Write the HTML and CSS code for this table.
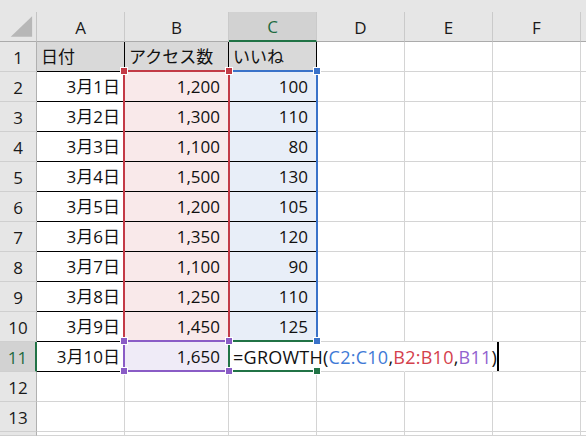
FILE: index.html
```html
<!DOCTYPE html>
<html lang="ja">
<head>
<meta charset="utf-8">
<link rel="stylesheet" href="styles.css">
</head>
<body>
<div class="sheet">
  <div class="strip"></div>

  <div class="corner"><svg width="37" height="30" viewBox="0 0 37 30"><polygon points="11,25 33,4 33,25" fill="#b7b7b7"/></svg></div>
  <div class="ch">A</div><div class="ch">B</div><div class="ch sel">C</div><div class="ch">D</div><div class="ch">E</div><div class="ch">F</div><div class="ch last"></div>

  <div class="rh">1</div><div class="c tb hd">日付</div><div class="c tb hd">アクセス数</div><div class="c tb hd">いいね</div><div class="c"></div><div class="c"></div><div class="c"></div><div class="c"></div>
  <div class="rh">2</div><div class="c tb r ra">3月1日</div><div class="c tb r rb pink">1,200</div><div class="c tb r rb blue">100</div><div class="c"></div><div class="c"></div><div class="c"></div><div class="c"></div>
  <div class="rh">3</div><div class="c tb r ra">3月2日</div><div class="c tb r rb pink">1,300</div><div class="c tb r rb blue">110</div><div class="c"></div><div class="c"></div><div class="c"></div><div class="c"></div>
  <div class="rh">4</div><div class="c tb r ra">3月3日</div><div class="c tb r rb pink">1,100</div><div class="c tb r rb blue">80</div><div class="c"></div><div class="c"></div><div class="c"></div><div class="c"></div>
  <div class="rh">5</div><div class="c tb r ra">3月4日</div><div class="c tb r rb pink">1,500</div><div class="c tb r rb blue">130</div><div class="c"></div><div class="c"></div><div class="c"></div><div class="c"></div>
  <div class="rh">6</div><div class="c tb r ra">3月5日</div><div class="c tb r rb pink">1,200</div><div class="c tb r rb blue">105</div><div class="c"></div><div class="c"></div><div class="c"></div><div class="c"></div>
  <div class="rh">7</div><div class="c tb r ra">3月6日</div><div class="c tb r rb pink">1,350</div><div class="c tb r rb blue">120</div><div class="c"></div><div class="c"></div><div class="c"></div><div class="c"></div>
  <div class="rh">8</div><div class="c tb r ra">3月7日</div><div class="c tb r rb pink">1,100</div><div class="c tb r rb blue">90</div><div class="c"></div><div class="c"></div><div class="c"></div><div class="c"></div>
  <div class="rh">9</div><div class="c tb r ra">3月8日</div><div class="c tb r rb pink">1,250</div><div class="c tb r rb blue">110</div><div class="c"></div><div class="c"></div><div class="c"></div><div class="c"></div>
  <div class="rh">10</div><div class="c tb r ra">3月9日</div><div class="c tb r rb pink">1,450</div><div class="c tb r rb blue">125</div><div class="c"></div><div class="c"></div><div class="c"></div><div class="c"></div>
  <div class="rh sel">11</div><div class="c tb r ra">3月10日</div><div class="c r rb lilac">1,650</div><div class="c nor formula">=GROWTH(<span class="fb">C2:C10</span>,<span class="fr">B2:B10</span>,<span class="fp">B11</span>)</div><div class="c nor"></div><div class="c nor"></div><div class="c"></div><div class="c"></div>
  <div class="rh">12</div><div class="c"></div><div class="c"></div><div class="c"></div><div class="c"></div><div class="c"></div><div class="c"></div><div class="c"></div>
  <div class="rh">13</div><div class="c"></div><div class="c"></div><div class="c"></div><div class="c"></div><div class="c"></div><div class="c"></div><div class="c"></div>
  <div class="rh"></div><div class="c"></div><div class="c"></div><div class="c"></div><div class="c"></div><div class="c"></div><div class="c"></div><div class="c"></div>

  <div class="rng rng-blue"></div>
  <div class="rng rng-red"></div>
  <div class="rng rng-purple"></div>
  <div class="rng rng-green"></div>

  <div class="hdl h-blue" style="left:313px;top:67px"></div>
  <div class="hdl h-blue" style="left:313px;top:337px"></div>
  <div class="hdl h-red" style="left:120px;top:67px"></div>
  <div class="hdl h-red" style="left:225px;top:67px"></div>
  <div class="hdl h-purple" style="left:120px;top:337px"></div>
  <div class="hdl h-purple" style="left:225px;top:337px"></div>
  <div class="hdl h-purple" style="left:120px;top:367px"></div>
  <div class="hdl h-purple" style="left:225px;top:367px"></div>
  <div class="hdl h-green" style="left:313px;top:367px"></div>

  <div class="caret"></div>
</div>
</body>
</html>
```

FILE: styles.css
```css
* { box-sizing: border-box; }
html, body { margin: 0; padding: 0; background: #fff; }
body {
  font-family: "Open Sans", "Noto Sans CJK JP", sans-serif;
  font-size: 17px;
  color: #111;
}
.sheet {
  position: relative;
  width: 586px;
  height: 436px;
  overflow: hidden;
  display: grid;
  grid-template-columns: 37px 88px 104px 88px 88px 88px 88px 1fr;
  grid-template-rows: 12px repeat(14, 30px) 1fr;
}
.strip {
  grid-column: 1 / -1;
  background: #e6e6e6;
}
.corner {
  background: #e6e6e6;
  border-right: 1px solid #c4c4c4;
  border-bottom: 1px solid #ababab;
  display: flex;
}
.ch {
  background: #e6e6e6;
  border-right: 1px solid #cacaca;
  border-bottom: 1px solid #ababab;
  display: flex;
  align-items: center;
  justify-content: center;
  line-height: 29px;
  color: #1a1a1a;
  padding-top: 1px;
}
.ch.sel {
  background: #d2d2d2;
  color: #1e6b41;
  border-bottom: 2px solid #217346;
}
.ch.last { border-right: none; }
.rh {
  background: #e6e6e6;
  border-right: 1px solid #b0b0b0;
  border-bottom: 1px solid #cfcfcf;
  display: flex;
  align-items: center;
  justify-content: center;
  color: #1a1a1a;
  padding-top: 1px;
}
.rh.sel {
  background: #d2d2d2;
  color: #1e6b41;
  border-right: 2px solid #217346;
}
.c {
  border-right: 1px solid #d4d4d4;
  border-bottom: 1px solid #d4d4d4;
  display: flex;
  align-items: center;
  white-space: nowrap;
  padding: 0 4px;
  line-height: 29px;
}
.c.tb { border-right-color: #000; border-bottom-color: #000; }
.c.hd { background: #d9d9d9; }
.c.r { justify-content: flex-end; }
.c.ra { padding-right: 4px; }
.c.rb { padding-right: 8px; }
.c.pink { background: #f9e9ea; }
.c.blue { background: #e8eef8; }
.c.lilac { background: #efebf7; }
.c.nor { border-right-color: transparent; background: transparent; }
.c.formula {
  overflow: visible;
  font-size: 18px;
  letter-spacing: 0.25px;
  padding-left: 4px;
  padding-top: 1px;
}
.fb { color: #3f7ad6; }
.fr { color: #d4404c; }
.fp { color: #9262cf; }

.rng {
  position: absolute;
  border: 2px solid;
}
.rng-blue { left: 228px; top: 70px; width: 90px; height: 272px; border-color: #3a72c9; }
.rng-red { left: 123px; top: 70px; width: 107px; height: 272px; border-color: #c33a46; }
.rng-purple { left: 123px; top: 340px; width: 107px; height: 32px; border-color: #8a5cc6; }
.rng-green { left: 228px; top: 340px; width: 90px; height: 32px; border-color: #217346; border-right: none; }

.hdl {
  position: absolute;
  width: 8px;
  height: 8px;
  border: 1px solid #fff;
}
.h-blue { background: #3a72c9; }
.h-red { background: #c33a46; }
.h-purple { background: #8a5cc6; }
.h-green { background: #217346; }

.caret {
  position: absolute;
  left: 497px;
  top: 342px;
  width: 2px;
  height: 29px;
  background: #000;
}
```
